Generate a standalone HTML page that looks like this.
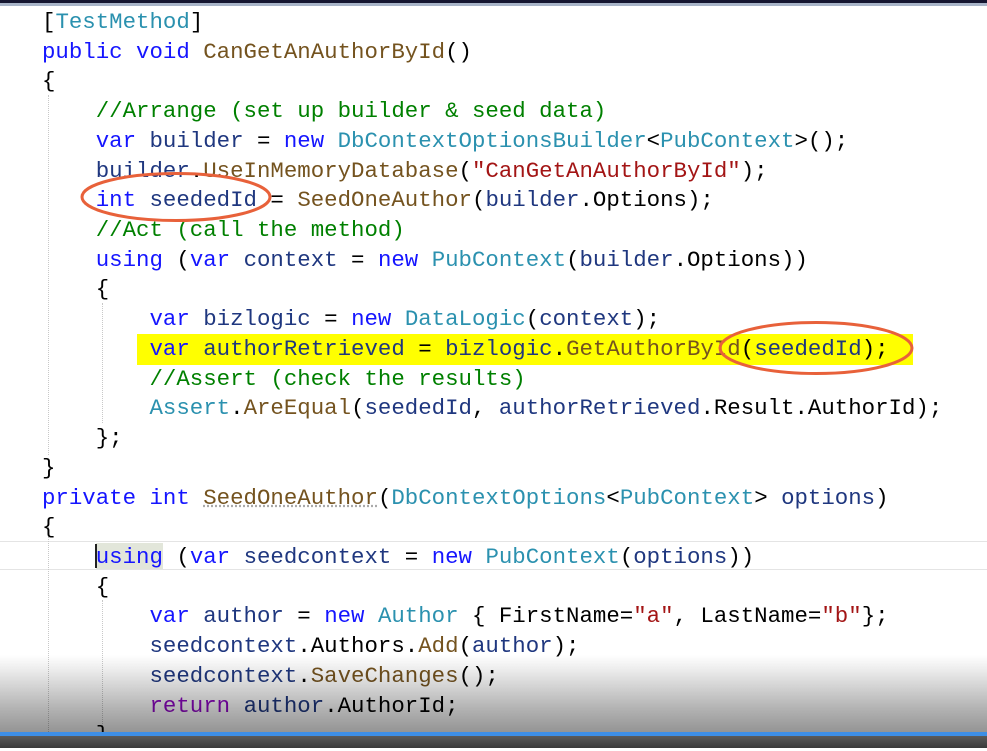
<!DOCTYPE html>
<html><head><meta charset="utf-8"><style>
html,body{margin:0;padding:0;}
body{width:987px;height:748px;overflow:hidden;background:#fff;position:relative;font-family:"Liberation Mono",monospace;}
.l{position:absolute;left:0;height:29.72px;line-height:29.72px;font-size:22.4px;white-space:pre;color:#000;}
.k{color:#1515ff}.t{color:#2b91af}.m{color:#74531f}.v{color:#1f377f}.s{color:#a31515}.c{color:#008000}.r{color:#8f08c4}
.g{position:absolute;width:0;border-left:1px dotted #c8c8c8;}
</style></head><body>
<div style="position:absolute;left:0;top:0;width:987px;height:3px;background:#151530"></div>
<div style="position:absolute;left:0;top:3px;width:987px;height:3px;background:#a8b4c8"></div>
<div style="position:absolute;left:137px;top:334px;width:776px;height:31px;background:#ffff00"></div>
<div style="position:absolute;left:0;top:541px;width:987px;height:29px;border-top:1px solid #e4e4e4;border-bottom:1px solid #e4e4e4;box-sizing:border-box"></div>
<div style="position:absolute;left:96px;top:543px;width:67px;height:26px;background:#e2e6da"></div>
<div style="position:absolute;left:95px;top:544px;width:2px;height:24px;background:#222"></div>
<div class="g" style="left:48px;top:95px;height:360px"></div>
<div class="g" style="left:48px;top:525px;height:223px"></div>
<div class="g" style="left:102px;top:303px;height:120px"></div>
<div class="g" style="left:102px;top:600px;height:148px"></div>
<div id="code" style="position:absolute;left:42px;top:8px">
<div class="l" style="top:0px">[<span class="t">TestMethod</span>]</div>
<div class="l" style="top:29.72px"><span class="k">public void</span> <span class="m">CanGetAnAuthorById</span>()</div>
<div class="l" style="top:59.44px">{</div>
<div class="l" style="top:89.16px">    <span class="c">//Arrange (set up builder &amp; seed data)</span></div>
<div class="l" style="top:118.88px">    <span class="k">var</span> <span class="v">builder</span> = <span class="k">new</span> <span class="t">DbContextOptionsBuilder</span>&lt;<span class="t">PubContext</span>&gt;();</div>
<div class="l" style="top:148.6px">    <span class="v">builder</span>.<span class="m">UseInMemoryDatabase</span>(<span class="s">"CanGetAnAuthorById"</span>);</div>
<div class="l" style="top:178.32px">    <span class="k">int</span> <span class="v">seededId</span> = <span class="m">SeedOneAuthor</span>(<span class="v">builder</span>.Options);</div>
<div class="l" style="top:208.04px">    <span class="c">//Act (call the method)</span></div>
<div class="l" style="top:237.76px">    <span class="k">using</span> (<span class="k">var</span> <span class="v">context</span> = <span class="k">new</span> <span class="t">PubContext</span>(<span class="v">builder</span>.Options))</div>
<div class="l" style="top:267.48px">    {</div>
<div class="l" style="top:297.2px">        <span class="k">var</span> <span class="v">bizlogic</span> = <span class="k">new</span> <span class="t">DataLogic</span>(<span class="v">context</span>);</div>
<div class="l" style="top:326.92px">        <span class="k">var</span> <span class="v">authorRetrieved</span> = <span class="v">bizlogic</span>.<span class="m">GetAuthorById</span>(<span class="v">seededId</span>);</div>
<div class="l" style="top:356.64px">        <span class="c">//Assert (check the results)</span></div>
<div class="l" style="top:386.36px">        <span class="t">Assert</span>.<span class="m">AreEqual</span>(<span class="v">seededId</span>, <span class="v">authorRetrieved</span>.Result.AuthorId);</div>
<div class="l" style="top:416.08px">    };</div>
<div class="l" style="top:445.8px">}</div>
<div class="l" style="top:475.52px"><span class="k">private int</span> <span class="m" style="text-decoration:underline dotted #aaa">SeedOneAuthor</span>(<span class="t">DbContextOptions</span>&lt;<span class="t">PubContext</span>&gt; <span class="v">options</span>)</div>
<div class="l" style="top:505.24px">{</div>
<div class="l" style="top:534.96px">    <span class="k">using</span> (<span class="k">var</span> <span class="v">seedcontext</span> = <span class="k">new</span> <span class="t">PubContext</span>(<span class="v">options</span>))</div>
<div class="l" style="top:564.68px">    {</div>
<div class="l" style="top:594.4px">        <span class="k">var</span> <span class="v">author</span> = <span class="k">new</span> <span class="t">Author</span> { FirstName=<span class="s">"a"</span>, LastName=<span class="s">"b"</span>};</div>
<div class="l" style="top:624.12px">        <span class="v">seedcontext</span>.Authors.<span class="m">Add</span>(<span class="v">author</span>);</div>
<div class="l" style="top:653.84px">        <span class="v">seedcontext</span>.<span class="m">SaveChanges</span>();</div>
<div class="l" style="top:683.56px">        <span class="r">return</span> <span class="v">author</span>.AuthorId;</div>
<div class="l" style="top:713.28px">    }</div>
</div>
<svg style="position:absolute;left:0;top:0" width="987" height="748">
<ellipse cx="176" cy="197" rx="94" ry="23.5" fill="none" stroke="#e8613a" stroke-width="3"/>
<ellipse cx="816" cy="348" rx="96" ry="25.5" fill="none" stroke="#e8613a" stroke-width="3"/>
</svg>
<div style="position:absolute;left:0;top:655px;width:987px;height:77px;background:linear-gradient(rgba(0,0,0,0),rgba(0,0,0,0.08) 20%,rgba(0,0,0,0.3) 70%,rgba(0,0,0,0.42))"></div>
<div style="position:absolute;left:0;top:732px;width:987px;height:4px;background:#3d8ee6"></div>
<div style="position:absolute;left:0;top:736px;width:987px;height:12px;background:linear-gradient(#5a5a5a,#3a3a3a)"></div>
</body></html>
